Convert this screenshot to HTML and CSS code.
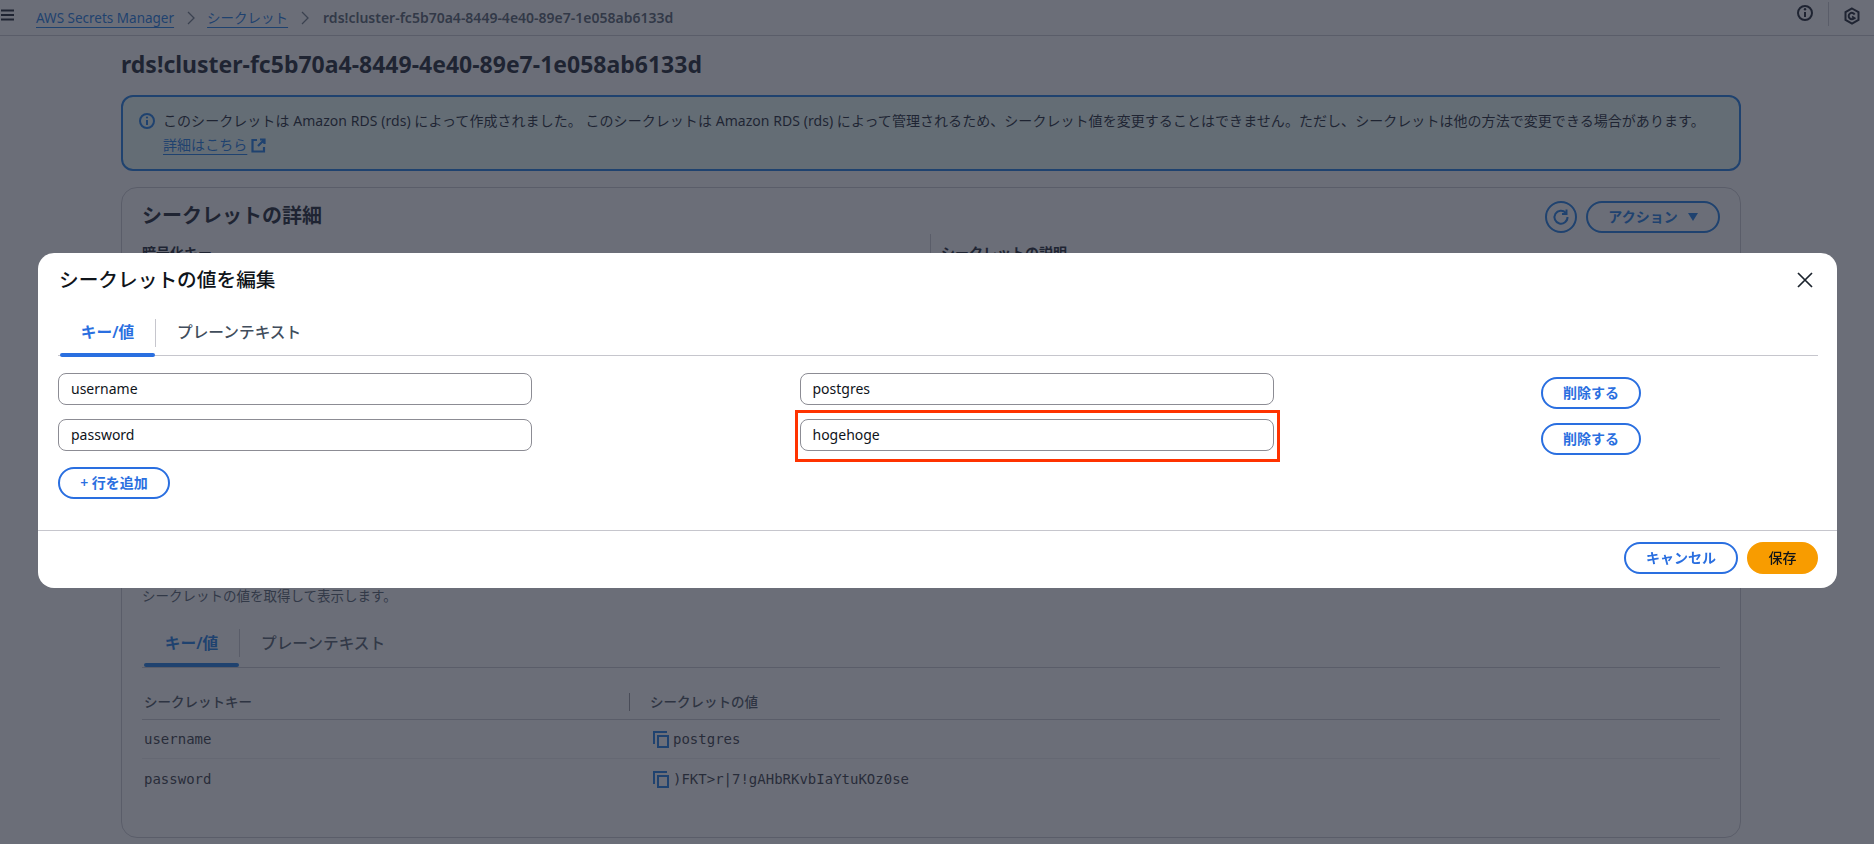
FILE: index.html
```html
<!DOCTYPE html>
<html lang="ja">
<head>
<meta charset="utf-8">
<title>AWS Secrets Manager</title>
<link rel="stylesheet" href="styles.css">
</head>
<body>
<header class="topbar">
  <svg class="burger" width="16" height="12" viewBox="0 0 16 12"><path d="M1 1.5h13M1 6h13M1 10.5h13" stroke="#000716" stroke-width="2" fill="none"/></svg>
  <nav class="crumbs">
    <a class="link">AWS Secrets Manager</a>
    <svg class="chev" width="10" height="16" viewBox="0 0 10 16"><path d="M2 2l6 6-6 6" stroke="#5f6b7a" stroke-width="1.3" fill="none"/></svg>
    <a class="link">シークレット</a>
    <svg class="chev" width="10" height="16" viewBox="0 0 10 16"><path d="M2 2l6 6-6 6" stroke="#5f6b7a" stroke-width="1.3" fill="none"/></svg>
    <span class="crumb-current">rds!cluster-fc5b70a4-8449-4e40-89e7-1e058ab6133d</span>
  </nav>
  <div class="top-icons">
    <svg class="top-info" width="18" height="18" viewBox="0 0 18 18"><circle cx="9" cy="9" r="7" stroke="#000716" stroke-width="2" fill="none"/><path d="M9 8v5" stroke="#000716" stroke-width="2" fill="none"/><circle cx="9" cy="5.3" r="1.2" fill="#000716"/></svg>
    <span class="top-sep"></span>
    <svg class="top-hex" width="18" height="18" viewBox="0 0 18 18"><path d="M9 1.500l6.500 3.700v7.600L9 16.500l-6.500-3.700V5.200z" stroke="#000716" stroke-width="2" fill="none"/><path d="M11.700 7.500A3.200 3.200 0 1 0 11.400 11" stroke="#000716" stroke-width="2" fill="none"/><path d="M9 9.500l3.500 2.300" stroke="#000716" stroke-width="1.800"/></svg>
  </div>
</header>

<main class="page">
  <h1 class="page-title">rds!cluster-fc5b70a4-8449-4e40-89e7-1e058ab6133d</h1>

  <section class="info">
    <svg class="info-icon" width="16" height="16" viewBox="0 0 16 16"><circle cx="8" cy="8" r="7" stroke="#006ce0" stroke-width="2" fill="none"/><path d="M8 7v5" stroke="#006ce0" stroke-width="2"/><circle cx="8" cy="4.500" r="1.100" fill="#006ce0"/></svg>
    <div class="info-text">
      <p class="info-line">このシークレットは Amazon RDS (rds) によって作成されました。 このシークレットは Amazon RDS (rds) によって管理されるため、シークレット値を変更することはできません。ただし、シークレットは他の方法で変更できる場合があります。</p>
      <p class="info-line"><a class="link">詳細はこちら</a>
        <svg class="ext" width="15" height="15" viewBox="0 0 15 15"><path d="M6 2H1.500v11.500H13V9M9 1.500h4.500V6M13.500 1.500L7 8" stroke="#006ce0" stroke-width="2.200" fill="none"/></svg></p>
    </div>
  </section>

  <section class="card">
    <div class="card-head">
      <h2 class="card-title">シークレットの詳細</h2>
      <div class="card-actions">
        <button class="btn-round"><svg width="18" height="18" viewBox="0 0 18 18"><path d="M13.800 4.800A6.500 6.500 0 1 0 15.500 9" stroke="#006ce0" stroke-width="2" fill="none"/><path d="M14.500 1.500v4.500H10" stroke="#006ce0" stroke-width="2" fill="none"/></svg></button>
        <button class="btn btn-action">アクション<span class="caret"></span></button>
      </div>
    </div>
    <div class="details">
      <div class="detail"><span class="detail-label">暗号化キー</span></div>
      <div class="detail detail-right"><span class="detail-label">シークレットの説明</span></div>
    </div>

    <p class="value-desc">シークレットの値を取得して表示します。</p>
    <div class="tabs tabs-page">
      <span class="tab tab-active">キー/値</span>
      <span class="tab-sep"></span>
      <span class="tab">プレーンテキスト</span>
    </div>
    <div class="table">
      <div class="t-row t-head"><span class="t-key">シークレットキー</span><span class="t-val t-val-head">シークレットの値</span></div>
      <div class="t-row t-body"><span class="t-key mono">username</span><span class="t-val"><svg class="copy" width="18" height="18" viewBox="0 0 18 18"><path d="M2 14V2h13" stroke="#006ce0" stroke-width="2" fill="none"/><rect x="6" y="6" width="10" height="11" stroke="#006ce0" stroke-width="2" fill="none"/></svg><span class="mono">postgres</span></span></div>
      <div class="t-row t-body t-last"><span class="t-key mono">password</span><span class="t-val"><svg class="copy" width="18" height="18" viewBox="0 0 18 18"><path d="M2 14V2h13" stroke="#006ce0" stroke-width="2" fill="none"/><rect x="6" y="6" width="10" height="11" stroke="#006ce0" stroke-width="2" fill="none"/></svg><span class="mono">)FKT&gt;r|7!gAHbRKvbIaYtuKOz0se</span></span></div>
    </div>
  </section>
</main>

<div class="overlay">
  <div class="modal">
    <div class="modal-head">
      <h2 class="modal-title">シークレットの値を編集</h2>
      <svg class="close" width="18" height="18" viewBox="0 0 18 18"><path d="M2 2l14 14M16 2L2 16" stroke="#1b232d" stroke-width="1.700" fill="none"/></svg>
    </div>
    <div class="tabs tabs-modal">
      <span class="tab tab-active">キー/値</span>
      <span class="tab-sep"></span>
      <span class="tab">プレーンテキスト</span>
    </div>
    <div class="kv-grid">
      <div class="field">username</div>
      <div class="field">postgres</div>
      <button class="btn btn-del">削除する</button>
      <div class="field">password</div>
      <div class="field field-marked">hogehoge<span class="marker"></span></div>
      <button class="btn btn-del">削除する</button>
    </div>
    <button class="btn btn-add">+ 行を追加</button>
    <div class="modal-foot">
      <button class="btn btn-cancel">キャンセル</button>
      <button class="btn btn-save">保存</button>
    </div>
  </div>
</div>
</body>
</html>
```

FILE: styles.css
```css
* { box-sizing: border-box; }
html, body { margin: 0; height: 844px; overflow: hidden; }
body {
  background: #fff;
  color: #000716;
  font-family: "Noto Sans", "Noto Sans CJK JP", sans-serif;
  font-size: 14px;
  line-height: 20px;
}
p, h1, h2 { margin: 0; }
button { font-family: inherit; cursor: pointer; }
.link { color: #006ce0; text-decoration: underline; text-underline-offset: 4px; }

.topbar {
  height: 36px;
  display: flex;
  align-items: center;
  border-bottom: 1px solid #c6c6cd;
}
.burger { flex: none; margin-top: -6px; }
.crumbs { display: flex; align-items: center; margin-left: 20px; font-size: 13.500px; }
.chev { margin: 0 11px 0 12px; }
.crumb-current { color: #414d5c; font-weight: 600; font-size: 14px; margin-left: 2px; }
.top-icons { margin-left: auto; display: flex; align-items: center; padding-right: 13px; }
.top-info { margin-top: -9px; }
.top-hex { margin-top: -3px; }
.top-sep { width: 1px; height: 24px; background: #c6c6cd; margin: -7px 14px 0 14px; }

.page { padding: 0 133px 0 121px; }
.page-title { font-size: 23px; line-height: 30px; font-weight: 700; margin-top: 13px; }

.info {
  margin-top: 16px;
  height: 76px;
  display: flex;
  gap: 8px;
  padding: 14px 16px;
  background: #e8fbf5;
  border: 2px solid #006ce0;
  border-radius: 12px;
}
.info-icon { flex: none; margin-top: 2px; }
.info-text { display: flex; flex-direction: column; gap: 4px; }
.info-line { white-space: nowrap; letter-spacing: 0.050px; }
.ext { vertical-align: -3px; margin-left: 0; }

.card {
  margin-top: 16px;
  height: 651px;
  padding: 13px 20px 0 20px;
  border: 1px solid #c6c6cd;
  border-radius: 16px;
}
.card-head { display: flex; justify-content: space-between; align-items: center; height: 32px; }
.card-title { font-size: 20px; line-height: 28px; font-weight: 700; position: relative; top: -1px; }
.card-actions { display: flex; gap: 9px; }
.btn-round {
  width: 32px; height: 32px; padding: 0;
  display: flex; align-items: center; justify-content: center;
  background: #fff; border: 2px solid #006ce0; border-radius: 50%;
}
.btn {
  height: 32px;
  padding: 0 20px;
  background: #fff;
  border: 2px solid #006ce0;
  border-radius: 20px;
  color: #006ce0;
  font-size: 14px;
  font-weight: 600;
  line-height: 20px;
  white-space: nowrap;
}
.btn-action { width: 134px; display: flex; align-items: center; justify-content: center; gap: 10px; padding: 0; }
.caret { width: 0; height: 0; border: 5px solid transparent; border-top: 8px solid #006ce0; border-bottom: 0; }

.details { display: grid; grid-template-columns: 788px 1fr; margin-top: 1px; height: 352px; }
.detail { padding-top: 9px; }
.detail-right { border-left: 1px solid #c6c6cd; padding-left: 10px; }
.detail-label { font-weight: 600; }

.value-desc { font-size: 13.500px; color: #414d5c; }

.tabs { display: flex; align-items: center; position: relative; border-bottom: 1px solid #c6c6cd; }
.tab { font-size: 15.700px; font-weight: 500; color: #414d5c; line-height: 22px; }
.tab-active { color: #006ce0; position: relative; width: 95px; text-align: center; font-weight: 600; }
.tab-active::after {
  content: ""; position: absolute; left: 0; right: 0; bottom: -13px; height: 4px;
  background: #006ce0; border-radius: 2px;
}
.tab-sep { width: 1px; height: 28px; background: #c6c6cd; margin-right: 21px; }

.tabs-page { margin-top: 19px; height: 43px; padding-left: 2px; padding-bottom: 7px; }

.table { margin-top: 19px; }
.t-row { display: grid; grid-template-columns: 487px 1fr; align-items: center; }
.t-key { padding-left: 2px; }
.t-head { height: 33px; border-bottom: 1px solid #c6c6cd; color: #333d4a; font-weight: 500; font-size: 13.500px; padding-bottom: 2px; }
.t-val-head { border-left: 1px solid #8c8c94; padding-left: 20px; line-height: 18px; }
.t-body { height: 39px; border-bottom: 1px solid #e9e9ed; color: #1b232d; }
.t-last { border-bottom: 0; height: 39px; }
.t-val { display: flex; align-items: center; }
.t-body .t-val { padding-left: 23px; }
.copy { flex: none; margin-right: 3px; }
.mono { font-family: "DejaVu Sans Mono", monospace; font-size: 14px; }

.overlay {
  position: fixed;
  inset: 0;
  background: rgba(44, 49, 62, 0.7);
  padding: 253px 37px 0 38px;
}
.modal {
  position: relative;
  height: 335px;
  background: #fff;
  border-radius: 16px;
  padding: 0 20px;
  display: flex;
  flex-direction: column;
  align-items: flex-start;
}
.modal-head { width: 100%; display: flex; justify-content: space-between; align-items: center; height: 28px; margin-top: 13px; padding-left: 1px; padding-right: 3px; }
.modal-title { font-size: 19.700px; line-height: 28px; font-weight: 500; color: #0f141a; }
.tabs-modal { width: calc(100% + 1px); margin-top: 24px; height: 38px; padding-left: 2px; padding-bottom: 0; }
.tabs-modal .tab { position: relative; top: -5px; }
.tabs-modal .tab-active { color: #2a6fe0; }
.tabs-modal .tab-sep { position: relative; top: -4px; }
.tabs-modal .tab-active::after { bottom: -14px; background: #2a6fe0; }

.kv-grid {
  display: grid;
  grid-template-columns: 741.500px 741.500px auto;
  grid-auto-rows: 32px;
  row-gap: 14px;
  margin-top: 17px;
  width: 100%;
}
.field {
  position: relative;
  width: 474px;
  height: 32px;
  padding: 0 12px;
  display: flex;
  align-items: center;
  border: 1px solid #8c8c94;
  border-radius: 8px;
  color: #0f141a;
}
.marker {
  position: absolute;
  top: -10px; bottom: -12px; left: -6px; right: -7px;
  border: 3px solid #ff3300;
}
.btn-del { width: 100px; padding: 0; margin-top: 4px; height: 32px; color: #2a6fe0; border-color: #2a6fe0; }
.btn-add { width: 112px; padding: 0; margin-top: 16px; color: #2a6fe0; border-color: #2a6fe0; }

.modal-foot {
  position: absolute;
  left: 0; right: 0; bottom: 0;
  height: 58px;
  display: flex;
  justify-content: flex-end;
  align-items: center;
  gap: 9px;
  padding: 0 19px 3px 0;
  border-top: 1px solid #c6c6cd;
}
.btn-cancel { width: 114px; padding: 0; color: #2a6fe0; border-color: #2a6fe0; }
.btn-save { width: 71px; padding: 0; background: #f89c00; border-color: #f89c00; color: #0f141a; font-weight: 500; }
```
